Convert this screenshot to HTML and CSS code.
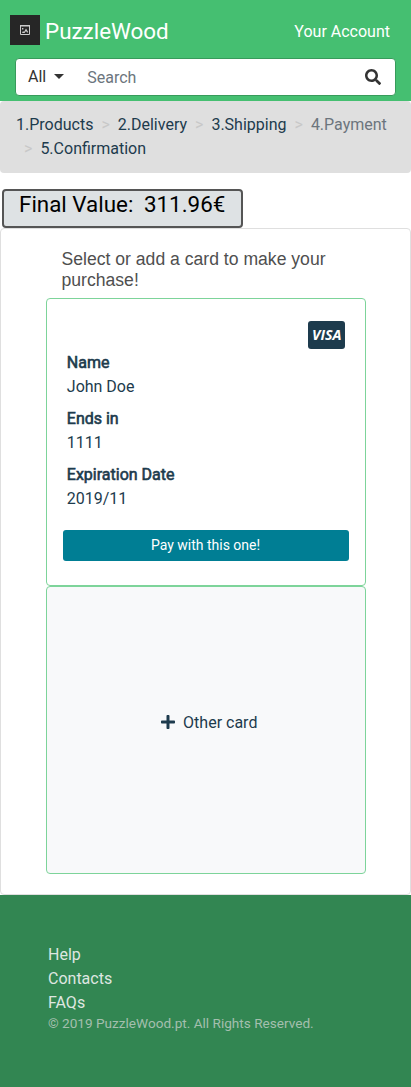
FILE: index.html
```html
<!DOCTYPE html>
<html lang="en">
<head>
<meta charset="utf-8">
<meta name="viewport" content="width=device-width, initial-scale=1">
<title>PuzzleWood - Payment</title>
<link rel="stylesheet" href="styles.css">
</head>
<body>
<header class="navbar">
  <div class="navbar-top">
    <a class="brand" href="#">
      <span class="brand-logo"><svg width="10" height="10" viewBox="0 0 10 10"><path fill="none" stroke="#ccc" d="M.5.5h9v9h-9z"/><path fill="#ccc" d="M0 0h10v1.600H0zM2 3h1.400v1.400H2zM2 8l1-2 1 1 2-3.400L8.200 7l-1 .8L6 6 4.600 8z"/></svg></span>
      <span class="brand-name">PuzzleWood</span>
    </a>
    <a class="account" href="#">Your Account</a>
  </div>
  <div class="search">
    <span class="search-scope">All<span class="caret"></span></span>
    <span class="search-input">Search</span>
    <svg class="search-icon" width="16" height="16" viewBox="0 0 512 512"><path fill="currentColor" d="M505 442.700L405.300 343c-4.500-4.500-10.600-7-17-7H372c27.600-35.300 44-79.700 44-128C416 93.100 322.900 0 208 0S0 93.100 0 208s93.100 208 208 208c48.300 0 92.700-16.400 128-44v16.300c0 6.400 2.500 12.500 7 17l99.700 99.700c9.400 9.400 24.600 9.400 33.900 0l28.300-28.300c9.400-9.400 9.400-24.600.1-34zM208 336c-70.700 0-128-57.200-128-128 0-70.700 57.200-128 128-128 70.700 0 128 57.200 128 128 0 70.700-57.200 128-128 128z"/></svg>
  </div>
</header>

<ol class="breadcrumb">
  <li class="crumb">1.Products</li>
  <li class="crumb">2.Delivery</li>
  <li class="crumb">3.Shipping</li>
  <li class="crumb crumb-active">4.Payment</li>
  <li class="crumb">5.Confirmation</li>
</ol>

<div class="total"><span>Final Value:</span><span>311.96€</span></div>

<main class="panel">
  <h1 class="panel-title">Select or add a card to make your purchase!</h1>
  <section class="pay-card">
    <svg class="visa" width="37" height="28" viewBox="0 0 37 28"><rect width="37" height="28" rx="3" fill="#1d3b4d"/><text class="visa-text" x="4" y="19" textLength="29.500" lengthAdjust="spacingAndGlyphs">VISA</text></svg>
    <dl class="details">
      <dt>Name</dt><dd>John Doe</dd>
      <dt>Ends in</dt><dd>1111</dd>
      <dt>Expiration Date</dt><dd>2019/11</dd>
    </dl>
    <button class="pay-button">Pay with this one!</button>
  </section>
  <section class="pay-card other-card">
    <svg class="plus" width="14" height="16" viewBox="0 0 448 512"><path fill="currentColor" d="M416 208H272V64c0-17.700-14.300-32-32-32h-32c-17.700 0-32 14.300-32 32v144H32c-17.700 0-32 14.300-32 32v32c0 17.700 14.300 32 32 32h144v144c0 17.700 14.300 32 32 32h32c17.700 0 32-14.300 32-32V304h144c17.700 0 32-14.300 32-32v-32c0-17.700-14.300-32-32-32z"/></svg>
    <span>Other card</span>
  </section>
</main>

<footer class="footer">
  <a href="#">Help</a>
  <a href="#">Contacts</a>
  <a href="#">FAQs</a>
  <small>© 2019 PuzzleWood.pt. All Rights Reserved.</small>
</footer>
</body>
</html>
```
FILE: styles.css
```css
* { box-sizing: border-box; }
body {
  margin: 0;
  min-height: 1087px;
  display: flex;
  flex-direction: column;
  background: #fff;
  color: #1d3b4d;
  font: 16px/24px Roboto, sans-serif;
}
a { color: inherit; text-decoration: none; }
.navbar {
  height: 101px;
  background: #45bf71;
  color: #fff;
}
.navbar-top {
  height: 58px;
  padding: 6px 21px 0 10px;
  display: flex;
  justify-content: space-between;
  align-items: center;
}
.brand { display: flex; align-items: center; gap: 5px; margin-top: -4px; }
.brand-logo {
  width: 30px;
  height: 30px;
  display: flex;
  align-items: center;
  justify-content: center;
  background: #262626;
}
.brand-name { padding-top: 1px; font-size: 22.400px; line-height: 30px; }
.search {
  height: 38px;
  margin: 0 15px;
  padding: 0 14px 0 12px;
  display: flex;
  align-items: center;
  border: 1px solid #379b5b;
  border-radius: 4px;
  background: #fff;
  color: #333;
}
.search-scope { display: flex; align-items: center; gap: 8px; }
.caret { border: 5px solid transparent; border-top-color: currentColor; border-bottom: 0; margin-top: -2px; }
.search-input { flex: 1; margin-left: 23px; padding-top: 2px; color: #6c757d; }
.breadcrumb {
  margin: 0 0 16px;
  padding: 12px 16px;
  display: flex;
  flex-wrap: wrap;
  list-style: none;
  background: #dfdfdf;
  border-radius: 4px;
}
.crumb + .crumb { padding-left: 8px; }
.crumb + .crumb::before {
  content: ">";
  display: inline-block;
  padding-right: 8px;
  color: #c8c8c8;
}
.crumb-active { color: #6c757d; }
.total {
  align-self: flex-start;
  width: 241px;
  height: 39px;
  margin-left: 2px;
  padding: 0 15px;
  display: flex;
  gap: 10.500px;
  border: 2px solid #555;
  border-radius: 4px;
  background: #dee2e4;
  color: #000;
  font-size: 22.400px;
  line-height: 27px;
}
.panel {
  height: 667px;
  padding: 20px 45px;
  border: 1px solid #dfdfdf;
  border-radius: 4px;
}
.panel-title {
  margin: 0 0 7px;
  padding: 0 15.500px;
  color: #4f4f4f;
  font: 17.600px/21px "Liberation Sans", sans-serif;
}
.pay-card {
  width: 320px;
  height: 288px;
  padding: 22px 16px;
  display: flex;
  flex-direction: column;
  border: 1px solid #7dd49a;
  border-radius: 4px;
}
.visa { align-self: flex-end; margin-right: 4px; }
.visa-text { fill: #fff; font: italic 700 14px "Open Sans", sans-serif; }
.details { margin: 2px 3.800px 0; }
.details dt { font-weight: 400; -webkit-text-stroke: .6px currentColor; }
.details dd { margin: 0 0 8px; }
.pay-button {
  height: 31px;
  margin-top: 11px;
  padding: 0 1px 0 0;
  border: 0;
  border-radius: 3px;
  background: #007e94;
  color: #fff;
  font: 14px/21px Roboto, sans-serif;
}
.other-card {
  flex-direction: row;
  align-items: center;
  justify-content: center;
  gap: 8px;
  padding: 0 0 15px 6.500px;
  background: #f8f9fa;
}
.plus { margin-bottom: 2px; }
.footer {
  flex: 1;
  padding: 48px;
  display: flex;
  flex-direction: column;
  background: #328652;
  color: #dfe6e1;
}
.footer small { font-size: 13.600px; line-height: 17px; color: #a4bfae; }
```
